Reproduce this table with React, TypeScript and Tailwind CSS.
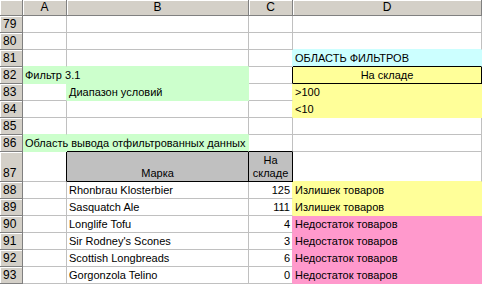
type Fill = "green" | "cyan" | "yellow" | "pink" | "gray";
type Line = Fill | "grid" | "black";

interface Cell {
  text?: string;
  fill?: Fill;
  align?: "left" | "right" | "center";
  box?: boolean;
}

interface Row {
  n: number;
  tall?: boolean;
  cells: Cell[];
}

const BG: Record<Fill, string> = {
  green: "bg-[#ccffcc]",
  cyan: "bg-[#ccffff]",
  yellow: "bg-[#ffff99]",
  pink: "bg-[#ff99cc]",
  gray: "bg-[#c0c0c0]",
};

const BORDER_R: Record<Line, string> = {
  grid: "border-r-[#c0c0c0]",
  black: "border-r-black",
  green: "border-r-[#ccffcc]",
  cyan: "border-r-[#ccffff]",
  yellow: "border-r-[#ffff99]",
  pink: "border-r-[#ff99cc]",
  gray: "border-r-[#c0c0c0]",
};

const BORDER_B: Record<Line, string> = {
  grid: "border-b-[#c0c0c0]",
  black: "border-b-black",
  green: "border-b-[#ccffcc]",
  cyan: "border-b-[#ccffff]",
  yellow: "border-b-[#ffff99]",
  pink: "border-b-[#ff99cc]",
  gray: "border-b-[#c0c0c0]",
};

const JUSTIFY = {
  left: "justify-start",
  right: "justify-end",
  center: "justify-center",
};

const E: Cell = {};

const ROWS: Row[] = [
  { n: 79, cells: [E, E, E, E] },
  { n: 80, cells: [E, E, E, E] },
  { n: 81, cells: [E, E, E, { text: "ОБЛАСТЬ ФИЛЬТРОВ", fill: "cyan" }] },
  {
    n: 82,
    cells: [
      { text: "Фильтр 3.1", fill: "green" },
      { fill: "green" },
      E,
      { text: "На складе", fill: "yellow", align: "center", box: true },
    ],
  },
  {
    n: 83,
    cells: [E, { text: "Диапазон условий", fill: "green" }, E, { text: ">100", fill: "yellow" }],
  },
  { n: 84, cells: [E, E, E, { text: "<10", fill: "yellow" }] },
  { n: 85, cells: [E, E, E, E] },
  {
    n: 86,
    cells: [
      { text: "Область вывода отфильтрованных данных", fill: "green" },
      { fill: "green" },
      E,
      E,
    ],
  },
  {
    n: 87,
    tall: true,
    cells: [
      E,
      { text: "Марка", fill: "gray", align: "center", box: true },
      { text: "На\nскладе", fill: "gray", align: "center", box: true },
      E,
    ],
  },
  ...(
    [
      ["Rhonbrau Klosterbier", "125", "Излишек товаров", "yellow"],
      ["Sasquatch Ale", "111", "Излишек товаров", "yellow"],
      ["Longlife Tofu", "4", "Недостаток товаров", "pink"],
      ["Sir Rodney's Scones", "3", "Недостаток товаров", "pink"],
      ["Scottish Longbreads", "6", "Недостаток товаров", "pink"],
      ["Gorgonzola Telino", "0", "Недостаток товаров", "pink"],
    ] as [string, string, string, Fill][]
  ).map(([name, qty, note, fill], i) => ({
    n: 88 + i,
    cells: [E, { text: name }, { text: qty, align: "right" as const }, { text: note, fill }],
  })),
];

// gridline colour: black box wins, then the cell's own fill, then the neighbour's fill
function edge(cell: Cell, next?: Cell): Line {
  if (cell.box || next?.box) return "black";
  if (cell.fill) return cell.fill;
  if (next?.fill) return next.fill;
  return "grid";
}

const HEAD =
  "bg-[#d4d0c8] border-r border-b border-r-[#808080] border-b-[#808080] shadow-[inset_1px_1px_0_#ffffff]";

export default function App() {
  return (
    <div
      className="w-[482px] h-[284px] overflow-hidden bg-white text-[11px] leading-[13px] text-black"
      style={{ fontFamily: '"Liberation Sans", Arial, sans-serif' }}
    >
      <div className="grid grid-cols-[23px_44px_182px_44px_189px]">
        {/* column letters */}
        <div className={`h-[16px] ${HEAD}`} />
        {["A", "B", "C", "D"].map((c) => (
          <div key={c} className={`h-[16px] flex items-center justify-center text-[12px] ${HEAD}`}>
            {c}
          </div>
        ))}

        {ROWS.map((row, r) => (
          <div key={row.n} className="contents">
            <div
              className={`${row.tall ? "h-[30px]" : "h-[17px]"} flex items-end pl-[3px] pb-[1px] text-[12px] ${HEAD}`}
            >
              {row.n}
            </div>
            {row.cells.map((cell, c) => {
              const right = edge(cell, row.cells[c + 1]);
              const below = edge(cell, ROWS[r + 1]?.cells[c]);
              return (
                <div
                  key={c}
                  className={`${row.tall ? "h-[30px]" : "h-[17px]"} flex items-end px-[2px] pb-[1px] border-r border-b ${BORDER_R[right]} ${BORDER_B[below]} ${cell.fill ? BG[cell.fill] : "bg-white"} ${JUSTIFY[cell.align ?? "left"]}`}
                >
                  {cell.text && (
                    <span
                      className={`relative z-10 whitespace-pre ${cell.align === "center" ? "text-center" : ""}`}
                    >
                      {cell.text}
                    </span>
                  )}
                </div>
              );
            })}
          </div>
        ))}
      </div>
    </div>
  );
}
